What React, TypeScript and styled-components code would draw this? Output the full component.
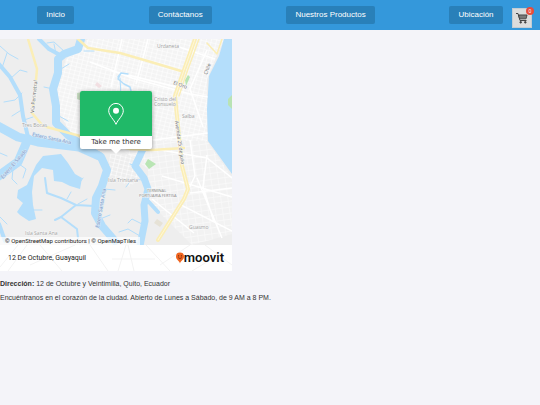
import React from "react";
import styled, { createGlobalStyle } from "styled-components";

const GlobalStyle = createGlobalStyle`
  * { box-sizing: border-box; }
  body {
    margin: 0;
    background: #f4f4f9;
    color: #333;
    font-family: "Liberation Sans", Arial, sans-serif;
    font-size: 7px;
    line-height: 8px;
  }
`;

const Header = styled.header`
  position: relative;
  background: #3498db;
  padding: 6px 0;
`;

const Nav = styled.nav`
  display: flex;
  justify-content: space-around;
`;

const NavLink = styled.a`
  padding: 4px 9px;
  border-radius: 2px;
  background: #2980b9;
  color: #fff;
  font-size: 8px;
  line-height: 10px;
  text-decoration: none;
`;

const CartButton = styled.button`
  position: absolute;
  top: 8px;
  right: 8px;
  display: flex;
  align-items: center;
  justify-content: center;
  width: 20px;
  height: 20px;
  padding: 0;
  border: 1px solid #c4cdd4;
  background: #dcdcdc;
`;

const CartCount = styled.span`
  position: absolute;
  top: -2px;
  right: -3px;
  width: 8px;
  height: 8px;
  border-radius: 50%;
  background: #e74c3c;
  color: #fff;
  font: 5px/8px "Liberation Sans", Arial, sans-serif;
  text-align: center;
`;

const Main = styled.main`
  padding-top: 9px;
`;

const MapCard = styled.figure`
  width: 232px;
  margin: 0 0 9px;
  background: #fff;
  font-family: Roboto, sans-serif;
`;

const MapArea = styled.div`
  position: relative;
`;

const MapDrawing = styled.svg`
  display: block;
  width: 100%;
`;

const Attribution = styled.small`
  position: absolute;
  left: 0;
  bottom: 0;
  padding: 0 4px 0 5px;
  background: rgba(255, 255, 255, 0.7);
  color: #222;
  font-size: 6px;
  line-height: 8px;
  white-space: nowrap;
`;

const Callout = styled.a`
  position: absolute;
  top: 52px;
  left: 80px;
  width: 72px;
  border-radius: 2px;
  background: #fff;
  box-shadow: 0 1px 4px rgba(0, 0, 0, 0.4);
  color: #333;
  font: 7px/13px "DejaVu Sans", sans-serif;
  text-align: center;
  text-decoration: none;

  &::after {
    content: "";
    position: absolute;
    top: 100%;
    left: 50%;
    margin-left: -5px;
    border: 5px solid transparent;
    border-top-color: #fff;
    border-bottom-width: 0;
  }
`;

const CalloutTop = styled.span`
  display: flex;
  align-items: center;
  justify-content: center;
  height: 45px;
  border-radius: 2px 2px 0 0;
  background: #20b968;
`;

const Caption = styled.figcaption`
  position: relative;
  display: flex;
  align-items: center;
  justify-content: space-between;
  height: 26px;
  padding: 0 8px;
  color: #222;
`;

const CaptionStreets = styled.svg`
  position: absolute;
  inset: 0;
  width: 100%;
  height: 100%;
`;

const Place = styled.span`
  position: relative;
  font-size: 7px;
`;

const Brand = styled.span`
  position: relative;
  display: flex;
  align-items: center;
  color: #111;
  font-size: 13px;
  font-weight: 600;
  line-height: 14px;
`;

const Paragraph = styled.p`
  margin: 0 0 6px;
`;

const links = ["Inicio", "Contáctanos", "Nuestros Productos", "Ubicación"];

const labels = [
  { x: 157, y: 9, text: "Urdaneta" },
  { x: 154, y: 62, text: "Cristo del" },
  { x: 154, y: 67, text: "Consuelo" },
  { x: 182, y: 79, text: "Salba" },
  { x: 22, y: 88, text: "Tres Bocas" },
  { x: 108, y: 143, text: "Isla Trinitaria" },
  { x: 25, y: 196, text: "Isla Santa Ana" },
  { x: 189, y: 190, text: "Guasmo" },
];

function City() {
  return (
    <MapDrawing viewBox="0 0 232 206" role="img" aria-label="Mapa de Guayaquil">
      <defs>
        <pattern id="blocks" width="5" height="4" patternUnits="userSpaceOnUse" patternTransform="rotate(14)">
          <path d="M0 0H5M0 0V4" stroke="#fff" strokeWidth="1.1" />
        </pattern>
        <pattern id="blocksSouth" width="7" height="6" patternUnits="userSpaceOnUse" patternTransform="rotate(-8)">
          <path d="M0 0H7M0 0V6" stroke="#fafafa" strokeWidth="1.4" />
        </pattern>
      </defs>
      <rect width="232" height="206" fill="#eeeeee" />
      <path d="M66 20L88 0H224L207 40V102H110L72 97L60 75L57 50Z" fill="#f4f4f4" />
      <path d="M66 20L88 0H224L207 40V102H110L72 97L60 75L57 50Z" fill="url(#blocks)" />
      <path d="M110 102H207L232 138V195L192 206L160 174L148 160V130Z" fill="#f2f2f2" />
      <path d="M110 102H207L232 138V195L192 206L160 174L148 160V130Z" fill="url(#blocksSouth)" />
      <path d="M110 115L139 116L135 130L142 138L130 148L108 136Z" fill="url(#blocks)" />
      <g fill="none" stroke="#fff" strokeWidth="1.5">
        <path d="M90 23L132 39L190 55L208 58M112 32L177 48M122 0L111 48M148 0L136 45M207 11L190 50L203 88M176 7L215 20M153 101L208 94M155 110L207 119L232 139M162 137L232 158M152 160L194 194M190 154L232 149M190 101L195 137L181 166L232 192M207 116L203 148L214 183M197 139L222 199" />
      </g>

      <path d="M224 0H232V135L219 117L208 102L207 70L209 37L219 17Z" fill="#b4defb" />
      <path d="M232 56L228 60V66L232 70Z" fill="#b9e3b4" />

      <g fill="none" stroke="#b4defb" strokeLinejoin="round" strokeLinecap="round">
        <path strokeWidth="8" d="M81 0L78 10L64 15L58 20L58 34L53 50L56 67L56 84L68 96L84 108L101 118L107 131L102 147L96 159L95 174L102 187L115 202" />
        <path strokeWidth="4" d="M-2 24L10 38L20 56L23 77L28 98" />
        <path strokeWidth="9" d="M-4 86L18 98L38 103L79 108L99 117" />
        <path strokeWidth="9" d="M28 100L18 123L-3 138" />
        <path strokeWidth="7" d="M143 110L135 127L144 139L148 150L144 166L145 182L140 207" />
        <path strokeWidth="4" d="M148 162L158 173M39 0L49 10L60 16M-1 185L5 202" />
        <path strokeWidth="2" d="M45 139L47 154L61 159L76 166L94 167M76 166L61 178L77 190L78 199M61 178L55 181" />
        <path strokeWidth="1.5" d="M128 35L121 34L118 40L124 45L130 48L132 56M121 34L118 38" />
        <path strokeWidth="1" d="M0 7L9 15L18 20M7 14L2 29M22 54L15 61L4 63M10 40L20 31L27 33M23 70L12 77M24 81L33 78M47 4L54 3L65 13M56 15L54 5M84 12L94 12M61 30L69 25M53 50L44 48M59 77L68 82M15 122L26 130L23 139M13 130L12 140L17 145M0 114L7 117M32 171L42 171M78 146L83 139M67 160L71 153M78 165L87 160M104 150L115 151M100 180L110 176M138 128L130 125M143 141L132 140L126 148M142 185L132 180L128 184M140 197L128 190L119 193M0 178L7 185M120 39L121 56" />
      </g>
      <path d="M43 117L61 115L68 124L75 135L82 139L80 150L70 147L62 143L54 142L53 131L42 129L34 137L32 153L33 166L36 180L29 182L20 176L17 173L23 164L17 159L18 151L27 146L31 137L36 126Z" fill="#b4defb" />

      <path d="M145 125L148 120L156 125L149 130Z" fill="#b9e5b4" />
      <path d="M185 41L188 36L190 38L186 47Z" fill="#b9e5b4" />
      <path d="M77 54L82 53V62L77 60Z" fill="#c9dfc3" />
      <path d="M157 180L163 184L160 188L154 184Z" fill="#e6e2d6" />
      <path d="M97 43L102 47L99 49L95 46Z" fill="#f2dfe2" />

      <g fill="none" stroke="#fbeeb6" strokeWidth="2.5" strokeLinecap="round" strokeLinejoin="round">
        <path d="M28 0L37 30L35 52L32 74L43 87L80 97L130 110L152 111L184 109" />
        <path d="M78 0L88 9L120 14L151 23L181 32" />
        <path strokeWidth="4" d="M195 0L184 31L175 57L180 107L182 127L188 150L184 160L158 201" />
        <path strokeWidth="1.5" d="M207 4L217 15L222 0M199 0L187 33L179 57" />
      </g>
      <path d="M195 0L184 31L175 57L180 107L182 127L188 150L184 160L158 201" fill="none" stroke="#fff7d7" strokeWidth="1" />

      <g fontFamily="Open Sans, sans-serif" fontSize="5" fill="#a3a3a3" stroke="#f7f7f7" strokeWidth="1" paintOrder="stroke">
        {labels.map((l) => (
          <text key={l.text} x={l.x} y={l.y}>{l.text}</text>
        ))}
        <g fill="#858585" fontSize="4">
          <text x="147" y="153">TERMINAL</text>
          <text x="139" y="158">PORTUARIA FERTISA</text>
        </g>
        <g fill="#666">
          <text transform="translate(34 74) rotate(-84)">Vía Perimetral</text>
          <text transform="translate(173 45) rotate(20)">El Oro</text>
          <text transform="translate(207 36) rotate(-70)">Chile</text>
          <text transform="translate(175 82) rotate(82)">Avenida 25 de julio</text>
        </g>
        <g fill="#7b8fc0" stroke="#d5e9f8">
          <text transform="translate(32 97) rotate(12)">Estero Santa Ana</text>
          <text transform="translate(3 140) rotate(-49)">Estero El Salado</text>
          <text transform="translate(99 189) rotate(-80)">Estero Santa Ana</text>
        </g>
      </g>
    </MapDrawing>
  );
}

export default function App() {
  return (
    <>
      <GlobalStyle />
      <Header>
        <Nav>
          {links.map((name) => (
            <NavLink key={name} href="#">{name}</NavLink>
          ))}
        </Nav>
        <CartButton aria-label="Carrito">
          <svg width="12" height="12" viewBox="0 0 12 12" fill="none" stroke="#444" strokeWidth="1">
            <path d="M0 1.5H2L4 8.5H10.5" />
            <path d="M2.5 3H11L10 6.8H3.6Z" fill="#666" />
            <path d="M3 4.8H10.5M5 3V7M7 3V7M9 3V7" stroke="#999" strokeWidth=".4" />
            <circle cx="4.7" cy="10.3" r=".8" fill="#333" />
            <circle cx="9.3" cy="10.3" r=".8" fill="#333" />
          </svg>
          <CartCount>0</CartCount>
        </CartButton>
      </Header>
      <Main>
        <MapCard>
          <MapArea>
            <City />
            <Attribution>© OpenStreetMap contributors | © OpenMapTiles</Attribution>
            <Callout href="#">
              <CalloutTop>
                <svg width="16" height="22" viewBox="0 0 16 22" fill="none">
                  <path d="M8 21.3C6 16.5 .7 12.5 .7 7.7A7.3 7.3 0 0 1 15.3 7.7C15.3 12.5 10 16.5 8 21.3Z" stroke="#fff" />
                  <circle cx="8" cy="7.7" r="3" fill="#fff" />
                </svg>
              </CalloutTop>
              Take me there
            </Callout>
          </MapArea>
          <Caption>
            <CaptionStreets viewBox="0 0 232 26" aria-hidden="true">
              <path d="M0 22L18 0M8 26L27 0M40 0L62 26M30 20L75 0M90 0L108 26M118 26L126 0M128 0L134 26M112 14H155M146 0L170 26M160 20L190 0M205 0L232 20M192 26L215 12" fill="none" stroke="#f3f3f3" />
            </CaptionStreets>
            <Place>12 De Octubre, Guayaquil</Place>
            <Brand>
              <svg width="8" height="12" viewBox="0 0 8 12">
                <path d="M4 11.5C3.5 9 0 8 0 4.6A4 4 0 0 1 8 4.6C8 8 4.5 9 4 11.5Z" fill="#f0641e" />
                <circle cx="2.6" cy="3.8" r=".6" fill="#5a2410" />
                <circle cx="5.4" cy="3.8" r=".6" fill="#5a2410" />
                <path d="M2.2 5.6Q4 7.6 5.8 5.6" fill="none" stroke="#5a2410" strokeWidth=".7" />
              </svg>
              moovit
            </Brand>
          </Caption>
        </MapCard>
        <Paragraph><strong>Dirección:</strong> 12 de Octubre y Veintimilla, Quito, Ecuador</Paragraph>
        <Paragraph>Encuéntranos en el corazón de la ciudad. Abierto de Lunes a Sábado, de 9 AM a 8 PM.</Paragraph>
      </Main>
    </>
  );
}
